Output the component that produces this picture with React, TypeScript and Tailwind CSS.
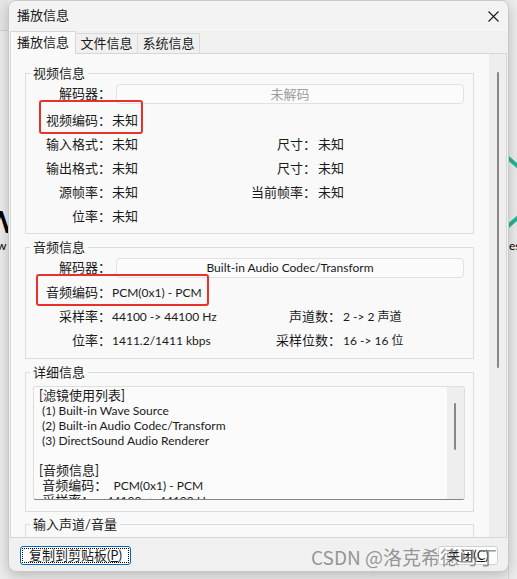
import React from 'react';

type Pair = { label: string; value: string; rLabel?: string; rValue?: string; latin?: boolean };

const videoRows: Pair[] = [
  { label: '输入格式：', value: '未知', rLabel: '尺寸：', rValue: '未知' },
  { label: '输出格式：', value: '未知', rLabel: '尺寸：', rValue: '未知' },
  { label: '源帧率：', value: '未知', rLabel: '当前帧率：', rValue: '未知' },
  { label: '位率：', value: '未知' },
];

const audioRows: Pair[] = [
  { label: '采样率：', value: '44100 -> 44100 Hz', rLabel: '声道数：', rValue: '2 -> 2 声道', latin: true },
  { label: '位率：', value: '1411.2/1411 kbps', rLabel: '采样位数：', rValue: '16 -> 16 位', latin: true },
];

// [cjk part, latin part]
const detailLines: [string, string][] = [
  ['[滤镜使用列表]', ''],
  ['', ' (1) Built-in Wave Source'],
  ['', ' (2) Built-in Audio Codec/Transform'],
  ['', ' (3) DirectSound Audio Renderer'],
  ['', ''],
  ['[音频信息]', ''],
  [' 音频编码：', '  PCM(0x1) - PCM'],
  [' 采样率：', '    44100 -> 44100 Hz'],
];

const GroupBox: React.FC<{ title: string; className?: string; children?: React.ReactNode }> = ({
  title,
  className = '',
  children,
}) => (
  <fieldset className={`w-[449px] flex-none border border-[#dcdcdc] ${className}`}>
    <legend className="ml-[4px] px-[3px] leading-[16px]">{title}</legend>
    {children}
  </fieldset>
);

const InfoRow: React.FC<{ row: Pair; valueW: string }> = ({ row, valueW }) => (
  <div className="flex h-[24px] items-center">
    <span className="w-[86px] pr-[1px] text-right">{row.label}</span>
    <span className={`${valueW} ${row.latin ? 'text-[12px]' : ''}`}>{row.value}</span>
    {row.rLabel && <span className="w-[86px] text-right">{row.rLabel}</span>}
    {row.rValue && <span className={`ml-[2px] ${row.latin ? 'text-[12px]' : ''}`}>{row.rValue}</span>}
  </div>
);

const Field: React.FC<{ label: string; text: string; muted?: boolean }> = ({ label, text, muted }) => (
  <div className="flex h-[20px] items-center">
    <span className="w-[86px] pr-[1px] text-right">{label}</span>
    <div
      className={`ml-[4px] h-[20px] w-[348px] rounded-[4px] border border-[#e1e1e1] bg-[#fbfbfb] text-center leading-[18px] ${
        muted ? 'text-[#9d9d9d]' : 'text-[12px] text-[#1a1a1a]'
      }`}
    >
      {text}
    </div>
  </div>
);

export default function App() {
  return (
    <div className="relative flex h-[579px] w-[517px] overflow-hidden bg-[#ededed] pl-[8px] font-['Lato','Noto_Sans_CJK_SC',sans-serif] text-[13px] text-[#1a1a1a]">
      {/* desktop behind the dialog */}
      <div className="absolute left-0 top-0 h-[31px] w-[8px] border-b border-[#d3d3d3] bg-[#e6e6e6]" />
      <div className="absolute left-[-15px] top-[206px] text-[30px] font-bold leading-none text-black">W</div>
      <div className="absolute left-[-3px] top-[240px] text-[12px] leading-none text-black">w</div>
      <div className="absolute left-[508px] top-[31px] h-[548px] w-px bg-[#d8d8d8]" />
      <div className="absolute left-[506px] top-[161px] h-[4px] w-[16px] rotate-[40deg] bg-[#1fb89a]" />
      <div className="absolute left-[506px] top-[219px] h-[4px] w-[16px] -rotate-[40deg] bg-[#1fb89a]" />
      <div className="absolute left-[509px] top-[240px] text-[12px] leading-none text-black">es</div>

      {/* dialog */}
      <div className="relative z-10 flex h-[572px] w-[501px] flex-none flex-col overflow-hidden rounded-[8px] border border-[#c8c8c8] bg-[#f0f0f0] shadow-[0_4px_14px_rgba(0,0,0,0.22)]">
        <div className="flex h-[30px] flex-none items-center justify-between bg-[#f3f3f3] pl-[8px] pr-[9px]">
          <span>播放信息</span>
          <svg width="11" height="11" viewBox="0 0 11 11">
            <path d="M0.5 0.5 L10.5 10.5 M10.5 0.5 L0.5 10.5" stroke="#1a1a1a" strokeWidth="1.1" />
          </svg>
        </div>

        {/* tabs */}
        <div className="flex h-[22px] flex-none items-end pl-[1px]">
          <div className="relative z-10 -mb-px flex h-[23px] w-[66px] items-center border border-b-0 border-[#d6d6d6] bg-[#f9f9f9] pl-[6px]">
            播放信息
          </div>
          <div className="flex h-[20px] w-[62px] items-center justify-center border border-b-0 border-l-0 border-[#dadada] bg-[#f0f0f0]">
            文件信息
          </div>
          <div className="flex h-[20px] w-[62px] items-center justify-center border border-b-0 border-l-0 border-[#dadada] bg-[#f0f0f0]">
            系统信息
          </div>
        </div>

        {/* tab panel */}
        <div className="mx-[1px] flex h-[485px] flex-none overflow-hidden border border-[#d6d6d6] bg-[#f9f9f9]">
          <div className="flex flex-1 flex-col overflow-hidden pl-[14px] pt-[11px]">
            <GroupBox title="视频信息" className="pb-[4px]">
              <div className="mt-[3px]">
                <Field label="解码器：" text="未解码" muted />
              </div>
              <div className="relative mt-[5px] flex h-[24px] items-center">
                <span className="w-[86px] pr-[1px] text-right">视频编码：</span>
                <span>未知</span>
                <div className="absolute left-[13px] top-[-9px] h-[34px] w-[104px] rounded-[3px] border-2 border-[#e8312b]" />
              </div>
              {videoRows.map((r, i) => (
                <InfoRow key={i} row={r} valueW="w-[118px]" />
              ))}
            </GroupBox>

            <GroupBox title="音频信息" className="mt-[5px] pb-[5px]">
              <div className="mt-[3px]">
                <Field label="解码器：" text="Built-in Audio Codec/Transform" />
              </div>
              <div className="relative mt-[3px] flex h-[24px] items-center">
                <span className="w-[86px] pr-[1px] text-right">音频编码：</span>
                <span className="text-[12px]">PCM(0x1) - PCM</span>
                <div className="absolute left-[10px] top-[-7px] h-[32px] w-[173px] rounded-[3px] border-2 border-[#e8312b]" />
              </div>
              {audioRows.map((r, i) => (
                <InfoRow key={i} row={r} valueW="w-[143px]" />
              ))}
            </GroupBox>

            <GroupBox title="详细信息" className="mt-[5px] pb-[11px]">
              <div className="ml-[7px] mt-[6px] flex h-[114px] w-[432px] overflow-hidden rounded-[3px] border border-[#dedede] border-b-[#858585] bg-[#fbfbfb]">
                <div className="flex-1 overflow-hidden whitespace-pre pl-[5px] pt-[1px] leading-[15px]">
                  {detailLines.map(([cjk, latin], i) => (
                    <div key={i} className="h-[15px]">
                      {cjk}
                      <span className="text-[12px]">{latin}</span>
                    </div>
                  ))}
                </div>
                <div className="w-[17px] flex-none bg-[#eeeeee] pl-[7px] pt-[16px]">
                  <div className="h-[47px] w-[2px] rounded-full bg-[#878787]" />
                </div>
              </div>
            </GroupBox>

            <GroupBox title="输入声道/音量" className="mt-[4px] h-[40px]" />
          </div>

          <div className="w-[17px] flex-none bg-[#eeeeee] pl-[8px] pt-[18px]">
            <div className="h-[296px] w-[2px] rounded-full bg-[#888888]" />
          </div>
        </div>

        {/* bottom buttons */}
        <div className="flex flex-1 items-start justify-between pl-[11px] pr-[10px] pt-[8px]">
          <button className="flex h-[19px] w-[111px] items-center justify-center rounded-[3px] border border-[#0067c0] bg-[#fdfdfd] p-[1px]">
            <span className="flex h-full w-full items-center justify-center border border-dotted border-black leading-none">
              复制到剪贴板(<span className="underline">P</span>)
            </span>
          </button>
          <button className="flex h-[19px] w-[60px] items-center justify-center rounded-[3px] border border-[#d0d0d0] bg-[#fdfdfd] leading-none">
            关闭(<span className="underline">C</span>)
          </button>
        </div>
      </div>

      {/* watermark */}
      <div className="absolute left-[311px] top-[545px] z-20 whitespace-nowrap font-['Noto_Sans_CJK_SC',sans-serif] text-[19px] leading-[24px] text-[#7c7c7c]/80">
        CSDN @洛克希德马丁
      </div>
    </div>
  );
}
